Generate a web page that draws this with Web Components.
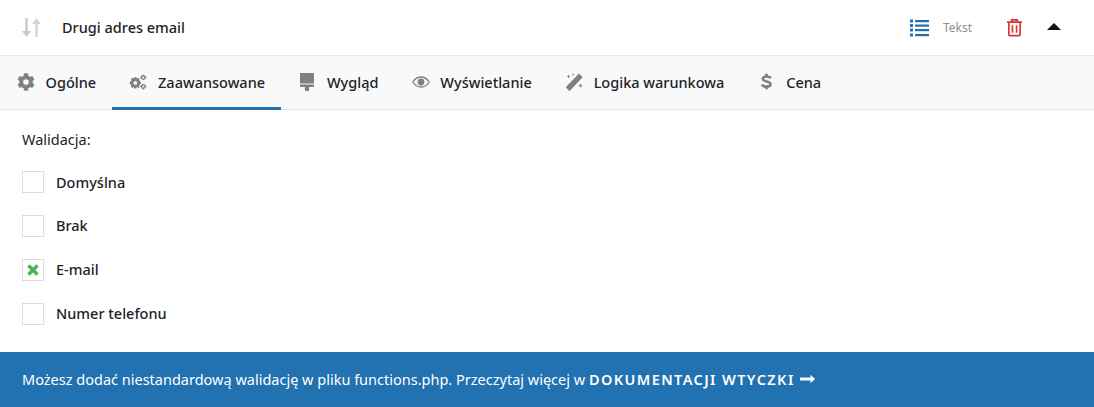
<!DOCTYPE html>
<html lang="pl">
<head>
<meta charset="utf-8">
<title>Pole formularza</title>
<style>
    html, body { margin: 0; background: #fff; }
    body { font-family: "Noto Sans", sans-serif; color: #1d2327; }
</style>
</head>
<body>
<field-editor>
    <field-header slot="header" title-text="Drugi adres email" type-text="Tekst"></field-header>
    <field-tabs slot="tabs">
        <field-tab icon="gear">Ogólne</field-tab>
        <field-tab icon="gears" active>Zaawansowane</field-tab>
        <field-tab icon="brush">Wygląd</field-tab>
        <field-tab icon="eye">Wyświetlanie</field-tab>
        <field-tab icon="wand">Logika warunkowa</field-tab>
        <field-tab icon="dollar">Cena</field-tab>
    </field-tabs>
    <check-group label="Walidacja:">
        <check-row>Domyślna</check-row>
        <check-row>Brak</check-row>
        <check-row checked>E-mail</check-row>
        <check-row>Numer telefonu</check-row>
    </check-group>
    <notice-bar slot="footer">Możesz dodać niestandardową walidację w pliku functions.php. Przeczytaj więcej w <b>DOKUMENTACJI WTYCZKI</b></notice-bar>
</field-editor>

<script>
const icons = {
    gear: `<svg viewBox="0 0 512 512" width="18" height="18" fill="#808080"><path d="M487 316l-42-25c4-23 4-47 0-70l42-25c5-3 7-8 5-14-11-35-30-67-54-93-4-4-10-5-15-2l-42 24c-18-15-39-27-61-35V28c0-6-4-11-9-12-36-8-73-8-108 0-6 1-10 6-10 12v48c-22 8-43 20-61 35L90 87c-5-3-11-2-15 2-24 26-43 58-54 93-2 6 0 11 5 14l42 25c-4 23-4 47 0 70l-42 25c-5 3-7 8-5 14 11 35 30 67 54 93 4 4 10 5 15 2l42-24c18 15 39 27 61 35v48c0 6 4 11 10 12 36 8 72 8 108 0 5-1 9-6 9-12v-48c22-8 43-20 61-35l42 24c5 3 11 2 15-2 24-26 43-58 54-93 2-6 0-11-5-14zM256 336a80 80 0 1 1 0-160 80 80 0 0 1 0 160z"/></svg>`,
    gears: `<svg viewBox="0 0 20 18" width="20" height="16" fill="#808080"><circle cx="7" cy="10" r="3.800" fill="none" stroke="#808080" stroke-width="3.400"/><path d="M5.800 3.600h2.400l.4 2H5.400zM5.800 16.400h2.400l.4-2H5.400zM.6 8.800h2v2.400h-2zM11.400 8.800h2v2.400h-2zM2 5.600l1.400-1.400 1.800 1.400-1.800 1.800zM12 5.600l-1.400-1.400-1.800 1.400 1.800 1.800zM2 14.400l1.400 1.400 1.800-1.400-1.800-1.800zM12 14.400l-1.400 1.400-1.800-1.400 1.800-1.800z"/><circle cx="16" cy="4" r="2" fill="none" stroke="#808080" stroke-width="1.600"/><circle cx="16" cy="14" r="2" fill="none" stroke="#808080" stroke-width="1.600"/><path d="M15.400.5h1.200V2h-1.200zM15.400 16h1.200v1.500h-1.200zM18.200 3.400v1.200h1.500V3.400zM18.200 13.400v1.200h1.500v-1.200zM12.300 3.400v1.200h1.500V3.400zM12.300 13.400v1.200h1.500v-1.200z"/></svg>`,
    brush: `<svg viewBox="0 0 14 18" width="14" height="18" fill="#808080"><rect x="0" y="0" width="14" height="10.500"/><path d="M0 11.500h14v1.500a1 1 0 0 1-1 1H9l.2 2.200a2.200 2.200 0 1 1-4.400 0L5 14H1a1 1 0 0 1-1-1z"/></svg>`,
    eye: `<svg viewBox="0 0 18 12" width="18" height="12"><path d="M.8 6C2.800 2.800 5.700 1 9 1s6.200 1.800 8.200 5c-2 3.200-4.900 5-8.200 5S2.800 9.200.8 6z" fill="none" stroke="#808080" stroke-width="1.300"/><circle cx="9" cy="6" r="3.400" fill="#808080"/></svg>`,
    wand: `<svg viewBox="0 0 19 18" width="19" height="18" fill="#808080"><path d="M14 .6l3.600 3.600L5.200 17.400a1 1 0 0 1-1.400 0L1.400 15a1 1 0 0 1 0-1.400z"/><path d="M3.500 1.500l.6 1.400 1.400.6-1.400.6-.6 1.400-.6-1.400-1.400-.6 1.400-.6zM8 0l.4 1 1 .4-1 .4L8 3l-.4-1.200-1-.4 1-.4zM15.500 10.500l.7 1.600 1.600.7-1.600.7-.7 1.600-.7-1.600-1.600-.7 1.600-.7z"/></svg>`,
    dollar: `<svg viewBox="0 0 12 18" width="11" height="17"><path d="M10.500 5.500C10 4 8.500 3.500 6 3.500c-2.500 0-4 .8-4 2.500 0 3.600 8.500 2.200 8.500 6 0 1.800-1.700 2.600-4.500 2.600s-4.500-.8-5-2.400" fill="none" stroke="#808080" stroke-width="2.800"/><path d="M4.500 0.500h3v3h-3zM4.500 14.500h3v3h-3z" fill="#808080"/></svg>`
};

class FieldEditor extends HTMLElement {
    constructor() {
        super();
        this.attachShadow({ mode: "open" }).innerHTML = `
            <style>
                :host { display: flex; flex-direction: column; height: 407px; background: #fff; }
                main { flex: 1; min-height: 0; }
            </style>
            <slot name="header"></slot>
            <slot name="tabs"></slot>
            <main><slot></slot></main>
            <slot name="footer"></slot>`;
    }
}

class FieldHeader extends HTMLElement {
    constructor() {
        super();
        const title = this.getAttribute("title-text");
        const type = this.getAttribute("type-text");
        this.attachShadow({ mode: "open" }).innerHTML = `
            <style>
                :host { display: flex; align-items: center; height: 55px; box-sizing: border-box; padding: 0 33px 0 22px; font-size: 14.500px; font-weight: 500; color: #1d2327; }
                .sort { margin-right: 21px; display: flex; }
                .title { flex: 1; margin-top: -2px; }
                .type { display: flex; align-items: center; gap: 14px; margin-right: 35px; font-size: 12px; font-weight: 400; color: #8c8f94; }
                .trash { display: flex; margin-right: 25px; }
                .caret { width: 0; height: 0; border: 7px solid transparent; border-top: 0; border-bottom: 7px solid #111; margin-top: -2px; }
            </style>
            <span class="sort">
                <svg viewBox="0 0 19 19" width="19" height="19">
                    <path d="M3.300 0h2.400v13H9l-4.500 6L0 13h3.300z" fill="#c8c8c8"/>
                    <path d="M13.300 19h2.400V6H19L14.500 0 10 6h3.300z" fill="#d0d5da"/>
                </svg>
            </span>
            <span class="title">${title}</span>
            <span class="type">
                <svg viewBox="0 0 19 18" width="19" height="18" fill="#2271b1">
                    <rect y="0.500" width="3" height="3"/><rect y="5" width="3" height="3"/><rect y="9.500" width="3" height="3"/><rect y="14.500" width="3" height="3"/>
                    <rect x="5" y="1" width="14" height="2.200"/><rect x="5" y="5.500" width="14" height="2.200"/><rect x="5" y="10" width="14" height="2.200"/><rect x="5" y="15" width="14" height="2.200"/>
                </svg>
                ${type}
            </span>
            <span class="trash">
                <svg viewBox="0 0 16 19" width="15" height="19" fill="none" stroke="#d63638" stroke-width="1.800">
                    <path d="M0 3.800h16M5 3.500V1.300h6v2.200M2 4v13a1.200 1.200 0 0 0 1.200 1.200h9.600A1.200 1.200 0 0 0 14 17V4M5.800 7v8M10.200 7v8"/>
                </svg>
            </span>
            <span class="caret"></span>`;
    }
}

class FieldTabs extends HTMLElement {
    constructor() {
        super();
        this.attachShadow({ mode: "open" }).innerHTML = `
            <style>
                :host { display: flex; height: 55px; box-sizing: border-box; background: #f9f9f9; border-top: 1px solid #eaeaea; border-bottom: 1px solid #e6e6e6; }
            </style>
            <slot></slot>`;
    }
}

class FieldTab extends HTMLElement {
    constructor() {
        super();
        const icon = icons[this.getAttribute("icon")];
        this.attachShadow({ mode: "open" }).innerHTML = `
            <style>
                :host { display: flex; align-items: center; box-sizing: border-box; height: 54px; padding: 0 16.300px 0 16px; font-size: 14.500px; font-weight: 500; color: #1d2327; border-bottom: 3px solid transparent; }
                :host([active]) { border-bottom-color: #2271b1; }
                .icon { width: 20px; margin-right: 9.600px; display: flex; justify-content: center; }
                svg { display: block; }
            </style>
            <span class="icon">${icon}</span><slot></slot>`;
    }
}

class CheckGroup extends HTMLElement {
    constructor() {
        super();
        this.attachShadow({ mode: "open" }).innerHTML = `
            <style>
                :host { display: flex; flex-direction: column; padding: 20px 22px 0; font-size: 14.500px; color: #1d2327; }
                .label { line-height: 19px; margin-bottom: 22px; }
                .rows { display: flex; flex-direction: column; gap: 22px; }
            </style>
            <div class="label">${this.getAttribute("label")}</div>
            <div class="rows"><slot></slot></div>`;
    }
}

class CheckRow extends HTMLElement {
    constructor() {
        super();
        const mark = this.hasAttribute("checked")
            ? `<svg viewBox="0 0 12 12" width="12" height="12"><path d="M1.500 1.500l9 9M10.500 1.500l-9 9" stroke="#46b450" stroke-width="3.400"/></svg>`
            : "";
        this.attachShadow({ mode: "open" }).innerHTML = `
            <style>
                :host { display: flex; align-items: center; gap: 12px; height: 22px; font-size: 14.500px; font-weight: 500; color: #1d2327; }
                .box { width: 22px; height: 22px; flex: none; box-sizing: border-box; border: 1px solid #dcdcde; background: #fff; display: flex; align-items: center; justify-content: center; }
                .text { margin-top: -3px; }
                :host(:first-child) .text { margin-top: -1px; }
            </style>
            <span class="box">${mark}</span>
            <span class="text"><slot></slot></span>`;
    }
}

class NoticeBar extends HTMLElement {
    constructor() {
        super();
        this.attachShadow({ mode: "open" }).innerHTML = `
            <style>
                :host { display: flex; align-items: center; height: 55px; box-sizing: border-box; padding: 0 22px 2px; background: #2271b1; color: #fff; font-size: 14.500px; white-space: pre; }
                ::slotted(b) { font-weight: 600; letter-spacing: 1.400px; }
                svg { margin-left: 5px; }
            </style>
            <span><slot></slot></span>
            <svg viewBox="0 0 15 10" width="15" height="10" fill="#fff"><path d="M0 3.500h10.500V.8L15 5l-4.500 4.200V6.500H0z"/></svg>`;
    }
}

customElements.define("field-editor", FieldEditor);
customElements.define("field-header", FieldHeader);
customElements.define("field-tabs", FieldTabs);
customElements.define("field-tab", FieldTab);
customElements.define("check-group", CheckGroup);
customElements.define("check-row", CheckRow);
customElements.define("notice-bar", NoticeBar);
</script>
</body>
</html>
